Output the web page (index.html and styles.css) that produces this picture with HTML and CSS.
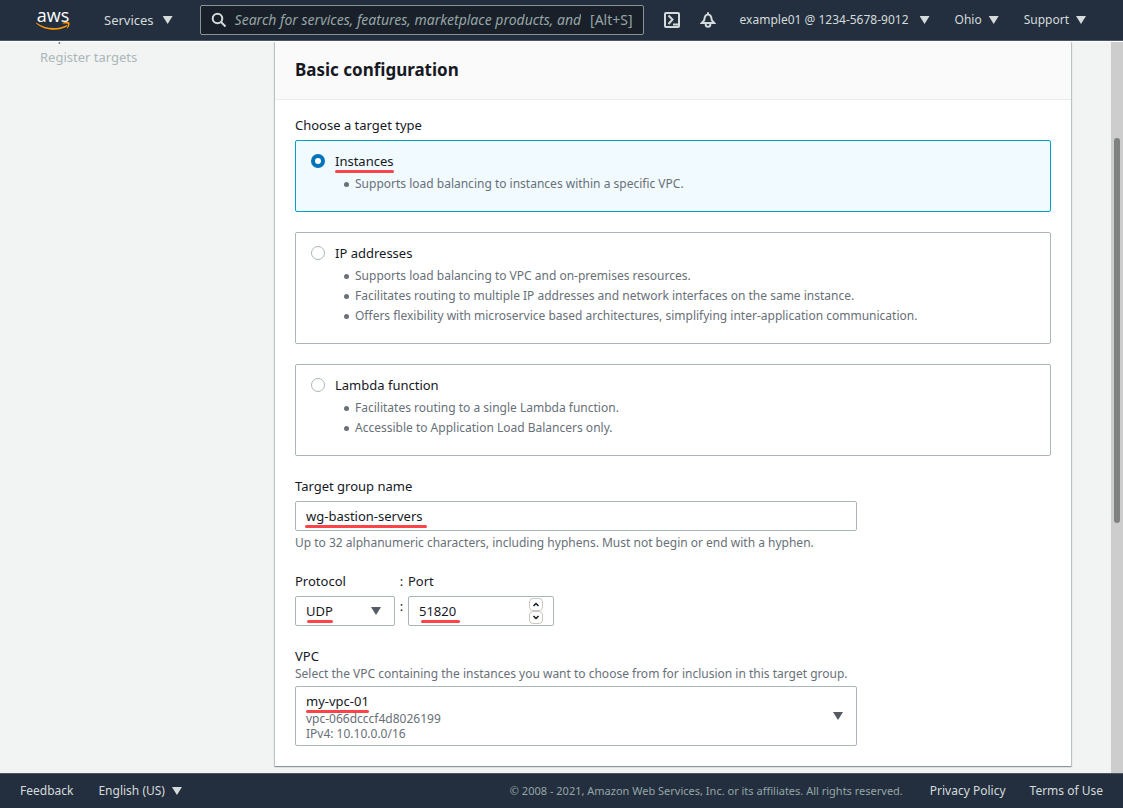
FILE: index.html
```html
<!DOCTYPE html>
<html lang="en">
<head>
<meta charset="utf-8">
<title>Create target group</title>
<link rel="stylesheet" href="styles.css">
</head>
<body>
<header class="topbar">
  <a class="logo" href="#" aria-label="AWS home">
    <span class="logo-word">aws</span>
    <svg class="logo-smile" viewBox="0 0 34 8" aria-hidden="true">
      <path d="M.4.8C9 7 21 7.600 30.500 3.200c.8-.3 1.300.4.700 1C22.500 9.500 8.500 9 .2 1.500c-.4-.4-.2-.9.200-.7z"/>
      <path d="M26.600.900c2-1.200 6-1.200 6.700-.5s0 4.300-1.900 5.900c-.4.3-.7.100-.5-.3.700-1.600 1.300-3.500.9-4-.4-.6-2.700-.5-4.800-.4-.5 0-.8-.4-.4-.7z"/>
    </svg>
  </a>
  <button class="menu menu-services" type="button">Services <span class="caret"></span></button>
  <div class="search">
    <svg class="search-icon" viewBox="0 0 16 16" aria-hidden="true"><circle cx="6.500" cy="6.500" r="4.800"/><path d="M10 10l4.500 4.500"/></svg>
    <input class="search-input" type="text" aria-label="Search" placeholder="Search for services, features, marketplace products, and docs">
    <span class="search-key">[Alt+S]</span>
  </div>
  <button class="icon-button" type="button" aria-label="CloudShell">
    <svg viewBox="0 0 16 16"><rect x="1" y="1" width="14" height="14" rx="1"/><path d="M4.500 3.500L8.500 7.500 4.500 12M9 12.500h5"/></svg>
  </button>
  <button class="icon-button" type="button" aria-label="Notifications">
    <svg viewBox="0 0 16 16"><path d="M8 .3V2M1.800 10.900h12.400L11.800 8.300C11.500 4.500 10.500 2.500 8 2.500S4.500 4.500 4.200 8.300zM5.700 11.500v1a2.300 2.300 0 0 0 4.600 0v-1"/></svg>
  </button>
  <button class="menu menu-account" type="button">example01 @ 1234-5678-9012 <span class="caret"></span></button>
  <button class="menu menu-small" type="button">Ohio <span class="caret"></span></button>
  <button class="menu menu-small" type="button">Support <span class="caret"></span></button>
</header>

<main class="page">
  <nav class="steps" aria-label="Steps">
    <div class="step-number">Step 2</div>
    <div class="step-name">Register targets</div>
  </nav>
  <form class="panel">
    <h2 class="panel-title">Basic configuration</h2>
    <div class="panel-body">
      <div class="field" role="radiogroup" aria-labelledby="type-label">
        <div class="label" id="type-label">Choose a target type</div>
        <div class="tiles">
          <div class="tile tile-selected">
            <input class="radio" type="radio" name="type" id="type-instances" checked>
            <div>
              <label class="tile-title" for="type-instances"><span class="mark">Instances</span></label>
              <ul class="tile-list"><li>Supports load balancing to instances within a specific VPC.</li></ul>
            </div>
          </div>
          <div class="tile">
            <input class="radio" type="radio" name="type" id="type-ip">
            <div>
              <label class="tile-title" for="type-ip">IP addresses</label>
              <ul class="tile-list">
                <li>Supports load balancing to VPC and on-premises resources.</li>
                <li>Facilitates routing to multiple IP addresses and network interfaces on the same instance.</li>
                <li>Offers flexibility with microservice based architectures, simplifying inter-application communication.</li>
              </ul>
            </div>
          </div>
          <div class="tile">
            <input class="radio" type="radio" name="type" id="type-lambda">
            <div>
              <label class="tile-title" for="type-lambda">Lambda function</label>
              <ul class="tile-list">
                <li>Facilitates routing to a single Lambda function.</li>
                <li>Accessible to Application Load Balancers only.</li>
              </ul>
            </div>
          </div>
        </div>
      </div>

      <div class="field field-narrow">
        <label class="label" for="name">Target group name</label>
        <div class="control mark-name"><input class="box" id="name" type="text" value="wg-bastion-servers"></div>
        <p class="hint hint-below">Up to 32 alphanumeric characters, including hyphens. Must not begin or end with a hyphen.</p>
      </div>

      <div class="field endpoint">
        <div class="protocol">
          <label class="label" for="protocol">Protocol</label>
          <div class="control mark-protocol">
            <select class="box" id="protocol"><option>UDP</option><option>TCP</option></select>
            <span class="caret caret-dark control-caret"></span>
          </div>
        </div>
        <div class="colon"><div class="label">:</div><div>:</div></div>
        <div class="port">
          <label class="label" for="port">Port</label>
          <div class="control mark-port">
            <input class="box" id="port" type="number" value="51820">
            <div class="spinner">
              <button class="spin" type="button" aria-label="Increase port"><svg viewBox="0 0 8 5"><path d="M1.500 4L4 1.500 6.500 4"/></svg></button>
              <button class="spin" type="button" aria-label="Decrease port"><svg viewBox="0 0 8 5"><path d="M1.500 1L4 3.500 6.500 1"/></svg></button>
            </div>
          </div>
        </div>
      </div>

      <div class="field field-narrow">
        <div class="label label-tight" id="vpc-label">VPC</div>
        <p class="hint hint-above">Select the VPC containing the instances you want to choose from for inclusion in this target group.</p>
        <button class="vpc" type="button" aria-labelledby="vpc-label vpc-value">
          <span class="vpc-text" id="vpc-value">
            <span class="vpc-name"><span class="mark">my-vpc-01</span></span>
            <span class="vpc-detail">vpc-066dcccf4d8026199</span>
            <span class="vpc-detail">IPv4: 10.10.0.0/16</span>
          </span>
          <span class="caret caret-dark"></span>
        </button>
      </div>
    </div>
  </form>
  <div class="scrollbar" aria-hidden="true"><div class="scroll-thumb"></div></div>
</main>

<footer class="footer">
  <a href="#">Feedback</a>
  <button class="menu menu-footer" type="button">English (US) <span class="caret"></span></button>
  <span class="copyright">© 2008 - 2021, Amazon Web Services, Inc. or its affiliates. All rights reserved.</span>
  <a class="footer-policy" href="#">Privacy Policy</a>
  <a href="#">Terms of Use</a>
</footer>
</body>
</html>
```
FILE: styles.css
```css
* { box-sizing: border-box; }

body {
  margin: 0;
  height: 100vh;
  display: flex;
  flex-direction: column;
  font-family: "Noto Sans", sans-serif;
  font-size: 13px;
  line-height: 20px;
  color: #16191f;
  background: #f2f3f3;
}

button, input, select { font: inherit; color: inherit; }
button { cursor: pointer; }
a { color: inherit; text-decoration: none; }

/* Top bar */
.topbar {
  flex: none;
  display: flex;
  align-items: center;
  height: 41px;
  padding: 0 37px 0 36px;
  background: #232f3e;
  border-bottom: 1px solid #4b5563;
  color: #d5dbdb;
}

.logo {
  display: flex;
  flex-direction: column;
  align-items: center;
  gap: 2px;
  width: 34px;
  color: #fff;
}
.logo-word {
  font-family: "Open Sans", sans-serif;
  font-size: 18px;
  font-weight: 500;
  line-height: 10px;
}
.logo-smile { width: 34px; height: 8px; fill: #ff9900; }

.menu {
  display: flex;
  align-items: center;
  gap: 8px;
  padding: 0;
  border: 0;
  background: none;
  white-space: nowrap;
}
.menu-services { margin-left: 34px; gap: 9px; }
.menu-account { margin-left: 24px; gap: 11px; font-size: 12px; }
.menu-small { margin-left: 25px; gap: 7px; font-size: 12px; }
.menu-footer { margin-left: 25px; gap: 7px; }

.caret {
  flex: none;
  width: 10px;
  height: 8px;
  background: currentColor;
  clip-path: polygon(0 0, 100% 0, 50% 100%);
}
.caret-dark { color: #545b64; }

.search {
  flex: 1;
  display: flex;
  align-items: center;
  height: 30px;
  margin-left: 27px;
  padding: 0 10px;
  border: 1px solid #879596;
  border-radius: 2px;
  background: #1a2029;
  color: #95a5a6;
  font-size: 14px;
}
.search-icon {
  flex: none;
  width: 16px;
  height: 16px;
  fill: none;
  stroke: #d5dbdb;
  stroke-width: 2;
}
.search-input {
  flex: 1;
  min-width: 0;
  margin: 0 9px 0 8px;
  padding: 0;
  border: 0;
  outline: 0;
  background: none;
}
.search-input::placeholder { color: #95a5a6; font-style: italic; opacity: 1; }

.icon-button {
  display: flex;
  margin-left: 20px;
  padding: 0;
  border: 0;
  background: none;
}
.icon-button svg {
  width: 16px;
  height: 16px;
  fill: none;
  stroke: #d5dbdb;
  stroke-width: 2;
}

/* Page */
.page {
  flex: 1;
  min-height: 0;
  display: flex;
  align-items: flex-start;
  overflow: hidden;
  border-top: 1px solid #fff;
}

.steps { flex: none; width: 275px; padding-left: 40px; }
.step-number { margin-top: -15px; font-size: 12px; color: #545b64; }
.step-name { color: #aab7b8; }

.panel {
  flex: 1;
  background: #fff;
  box-shadow: 0 1px 1px rgba(0, 28, 36, .3), 0 0 1px 1px rgba(0, 28, 36, .18);
}
.panel-title {
  margin: 0;
  padding: 16px 20px 17px;
  border-bottom: 1px solid #eaeded;
  background: #fafafa;
  font-size: 17px;
  line-height: 24px;
}
.panel-body {
  display: flex;
  flex-direction: column;
  gap: 20px;
  padding: 15px 20px 20px;
}
.field-narrow { width: 75%; max-width: 562px; }
.label { display: block; margin-bottom: 5px; }
.label-tight { margin-bottom: 0; }
.hint { margin: 0; font-size: 12px; line-height: 16px; color: #687078; white-space: nowrap; }
.hint-below { margin-top: 4px; }
.hint-above { margin-bottom: 4px; }

.tiles { display: flex; flex-direction: column; gap: 20px; }
.tile {
  display: flex;
  gap: 9px;
  padding: 10px 15px 17px;
  border: 1px solid #aab7b8;
  border-radius: 2px;
}
.tile-selected { border-color: #00a1c9; background: #f1faff; }
.tile-title { display: block; }
.radio {
  appearance: none;
  flex: none;
  width: 14px;
  height: 14px;
  margin: 3px 1px 0 0;
  border: 1px solid #aab7b8;
  border-radius: 50%;
  background: #fff;
}
.radio:checked { border: 4px solid #0073bb; }
.tile-list {
  margin: 3px 0 0;
  padding: 0;
  list-style: none;
  font-size: 12px;
  color: #687078;
}
.tile-list li { display: flex; align-items: center; gap: 6px; padding-left: 9px; }
.tile-list li::before {
  content: "";
  flex: none;
  width: 5px;
  height: 5px;
  border-radius: 50%;
  background: #687078;
}

/* Controls */
.control { position: relative; }
.box {
  display: block;
  appearance: none;
  width: 100%;
  height: 30px;
  margin: 0;
  padding: 0 10px;
  border: 1px solid #aab7b8;
  border-radius: 2px;
  background: #fff;
}
.box[type="number"] { appearance: textfield; }
.box[type="number"]::-webkit-inner-spin-button { appearance: none; margin: 0; }
.control-caret { position: absolute; top: 11px; right: 14px; pointer-events: none; }

.endpoint { display: flex; }
.protocol { width: 100px; }
.colon { width: 13px; text-align: center; }
.port { width: 146px; }

.spinner {
  position: absolute;
  top: 2px;
  right: 11px;
  display: flex;
  flex-direction: column;
}
.spin {
  display: flex;
  align-items: center;
  justify-content: center;
  width: 14px;
  height: 13px;
  padding: 0;
  border: 1px solid #cdc7c2;
  border-radius: 4px;
  background: #fff;
}
.spin svg { width: 8px; height: 5px; fill: none; stroke: #16191f; stroke-width: 1.5; }

.vpc {
  display: flex;
  align-items: center;
  justify-content: space-between;
  width: 100%;
  padding: 4px 13px 4px 10px;
  border: 1px solid #aab7b8;
  border-radius: 2px;
  background: #fff;
  text-align: left;
}
.vpc-text { display: flex; flex-direction: column; }
.vpc-detail { font-size: 12px; line-height: 15px; color: #687078; }

/* Red underlines that point out the chosen values */
.mark { position: relative; }
.mark::after, .control::after {
  content: "";
  position: absolute;
  height: 3px;
  border-radius: 2px;
  background: #fd4549;
}
.mark::after { left: 0; right: 0; bottom: -3px; }
.control::after { bottom: 3px; }
.mark-name::after { left: 10px; width: 122px; }
.mark-protocol::after { left: 12px; width: 26px; }
.mark-port::after { left: 13px; width: 39px; }

/* Scroll indicator */
.scrollbar { flex: none; align-self: stretch; width: 12px; margin-left: 40px; padding: 96px 3px 0; background: #cdcdcd; }
.scroll-thumb { height: 385px; border-radius: 3px; background: #7f8080; }

/* Footer */
.footer {
  flex: none;
  display: flex;
  align-items: center;
  height: 35px;
  padding: 0 20px;
  border-top: 1px solid #4b5563;
  background: #232f3e;
  color: #d5dbdb;
  font-size: 12px;
}
.footer a + a { margin-left: 24px; }
.copyright { margin-left: auto; font-size: 11px; color: #95a5a6; }
.footer-policy { margin-left: 27px; }
```
